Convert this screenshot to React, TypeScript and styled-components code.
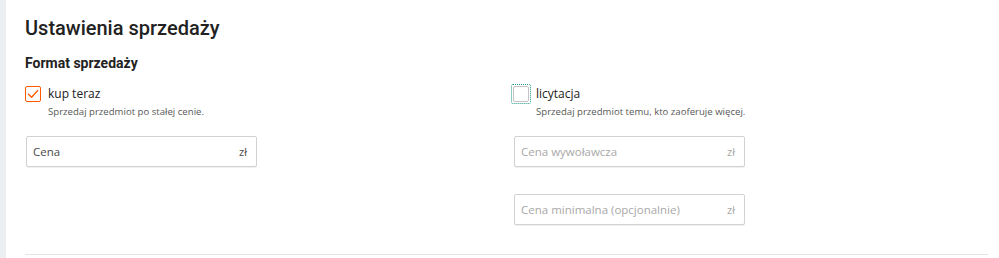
import { createGlobalStyle, styled } from "styled-components";

const GlobalStyle = createGlobalStyle`
  html, body {
    margin: 0;
    padding: 0;
    background: #ffffff;
  }
  body {
    font-family: "Open Sans", "Liberation Sans", sans-serif;
    color: #222222;
  }
`;

type FormatOption = {
  label: string;
  hint: string;
  checked: boolean;
  focused?: boolean;
  fields: { placeholder: string; disabled?: boolean }[];
};

const options: FormatOption[] = [
  {
    label: "kup teraz",
    hint: "Sprzedaj przedmiot po stałej cenie.",
    checked: true,
    fields: [{ placeholder: "Cena" }],
  },
  {
    label: "licytacja",
    hint: "Sprzedaj przedmiot temu, kto zaoferuje więcej.",
    checked: false,
    focused: true,
    fields: [
      { placeholder: "Cena wywoławcza", disabled: true },
      { placeholder: "Cena minimalna (opcjonalnie)", disabled: true },
    ],
  },
];

function CheckMark() {
  return (
    <svg width="12" height="12" viewBox="0 0 12 12" fill="none">
      <path
        d="M1.5 6.2 L4.6 9.2 L10.6 2.6"
        stroke="#ff5a00"
        strokeWidth="1.4"
        strokeLinecap="round"
        strokeLinejoin="round"
      />
    </svg>
  );
}

function App() {
  return (
    <Page>
      <GlobalStyle />
      <SideStrip />
      <Section>
        <Title>Ustawienia sprzedaży</Title>
        <Subtitle>Format sprzedaży</Subtitle>
        <Columns>
          {options.map((opt) => (
            <Column key={opt.label}>
              <CheckRow>
                <FocusRing $focused={!!opt.focused}>
                  <Box $checked={opt.checked}>
                    {opt.checked && <CheckMark />}
                  </Box>
                </FocusRing>
                <Label>{opt.label}</Label>
              </CheckRow>
              <Hint>{opt.hint}</Hint>
              <Fields>
                {opt.fields.map((f) => (
                  <Field key={f.placeholder}>
                    <FieldText $disabled={!!f.disabled}>{f.placeholder}</FieldText>
                    <Unit $disabled={!!f.disabled}>zł</Unit>
                  </Field>
                ))}
              </Fields>
            </Column>
          ))}
        </Columns>
        <Divider />
      </Section>
    </Page>
  );
}

export default App;

const Page = styled.div`
  display: flex;
  width: 999px;
  height: 258px;
  overflow: hidden;
  background: #ffffff;
`;

const SideStrip = styled.div`
  width: 6px;
  flex-shrink: 0;
  background: #eceff1;
`;

const Section = styled.div`
  flex: 1;
  padding: 14px 11px 0 19px;
  display: flex;
  flex-direction: column;
`;

const Title = styled.h1`
  margin: 0;
  font-family: Roboto, "Liberation Sans", sans-serif;
  font-weight: 500;
  font-size: 20px;
  line-height: 28px;
  color: #222222;
`;

const Subtitle = styled.h2`
  margin: 11px 0 0;
  font-family: Roboto, "Liberation Sans", sans-serif;
  font-weight: 700;
  font-size: 14px;
  line-height: 20px;
  color: #222222;
`;

const Columns = styled.div`
  display: grid;
  grid-template-columns: 488px 1fr;
  margin-top: 13px;
`;

const Column = styled.div`
  display: flex;
  flex-direction: column;
`;

const CheckRow = styled.div`
  display: flex;
  align-items: center;
  gap: 7px;
  height: 16px;
`;

const FocusRing = styled.div<{ $focused: boolean }>`
  display: flex;
  padding: 1px;
  margin: -2px;
  border: 1px dotted ${(p) => (p.$focused ? "#1f9a88" : "transparent")};
  border-radius: 2px;
`;

const Box = styled.div<{ $checked: boolean }>`
  box-sizing: border-box;
  width: 16px;
  height: 16px;
  border: 1px solid ${(p) => (p.$checked ? "#ff5a00" : "#c4c4c4")};
  border-radius: 2px;
  background: #ffffff;
  display: flex;
  align-items: center;
  justify-content: center;
`;

const Label = styled.span`
  font-size: 12px;
  line-height: 16px;
  color: #222222;
`;

const Hint = styled.div`
  margin: 2px 0 0 23px;
  font-size: 9.6px;
  line-height: 16px;
  color: #595959;
`;

const Fields = styled.div`
  display: flex;
  flex-direction: column;
  gap: 27px;
  margin-top: 16px;
  padding-left: 1px;
`;

const Field = styled.div`
  box-sizing: border-box;
  width: 231px;
  height: 31px;
  border: 1px solid #d2d2d2;
  border-radius: 2px;
  box-shadow: 0 1px 0 rgba(0, 0, 0, 0.06);
  display: flex;
  align-items: center;
  justify-content: space-between;
  padding: 0 9px 0 6px;
  background: #ffffff;
`;

const FieldText = styled.span<{ $disabled: boolean }>`
  font-size: 11.5px;
  color: ${(p) => (p.$disabled ? "#a8a8a8" : "#4a4a4a")};
`;

const Unit = styled.span<{ $disabled: boolean }>`
  font-size: 11px;
  color: ${(p) => (p.$disabled ? "#a8a8a8" : "#4a4a4a")};
`;

const Divider = styled.div`
  margin-top: 29px;
  height: 1px;
  background: #e4e4e4;
`;
